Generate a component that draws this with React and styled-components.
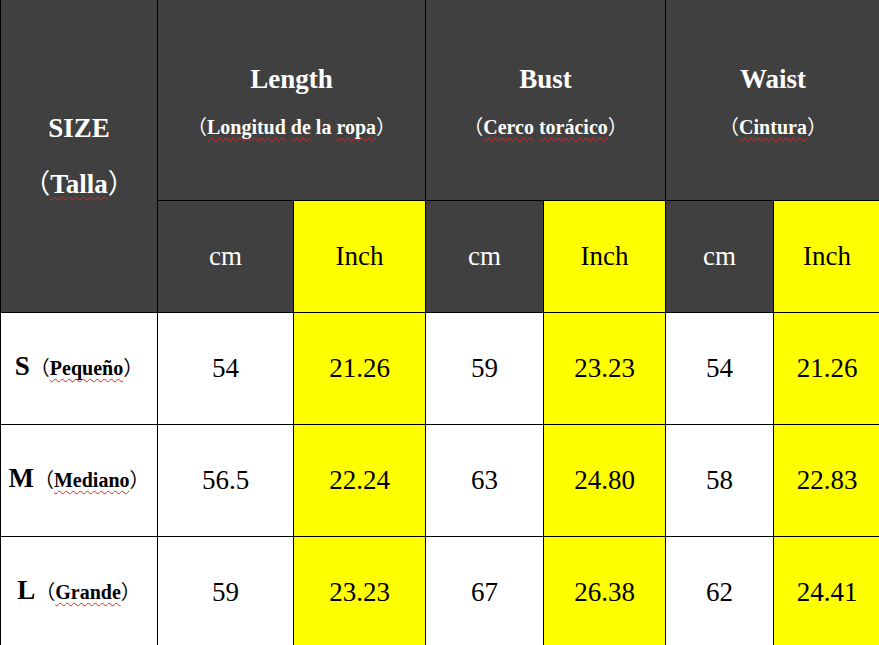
import React from 'react';
import styled, { createGlobalStyle } from 'styled-components';

const colors = {
    DARK: '#404040',
    YELLOW: '#ffff00',
    WHITE: '#ffffff',
    BLACK: '#000000',
    SQUIGGLE: '#d42a2a',
};

const GROUPS = [
    { TITLE: 'Length', SUB: [['Longitud', true], [' ', false], ['de', true], [' la ', false], ['ropa', true]] },
    { TITLE: 'Bust', SUB: [['Cerco', true], [' ', false], ['torácico', true]] },
    { TITLE: 'Waist', SUB: [['Cintura', true]] },
];

const ROWS = [
    { SIZE: 'S', NAME: 'Pequeño', VALUES: ['54', '21.26', '59', '23.23', '54', '21.26'] },
    { SIZE: 'M', NAME: 'Mediano', VALUES: ['56.5', '22.24', '63', '24.80', '58', '22.83'] },
    { SIZE: 'L', NAME: 'Grande', VALUES: ['59', '23.23', '67', '26.38', '62', '24.41'] },
];

const App = () => {
    return (
        <>
            <GlobalStyle />
            <Table>
                <SizeHead>
                    <HeadTitle>SIZE</HeadTitle>
                    <HeadSub $big><Paren>（</Paren><Spell>Talla</Spell><Paren>）</Paren></HeadSub>
                </SizeHead>
                {
                    GROUPS.map((group, index) => (
                        <GroupHead key={"g" + index}>
                            <HeadTitle>{group.TITLE}</HeadTitle>
                            <HeadSub>
                                <Paren>（</Paren>
                                {group.SUB.map(([text, wrong], i) =>
                                    wrong ? <Spell key={i}>{text}</Spell> : <span key={i}>{text}</span>
                                )}
                                <Paren>）</Paren>
                            </HeadSub>
                        </GroupHead>
                    ))
                }
                {
                    GROUPS.map((group, index) => (
                        <React.Fragment key={"u" + index}>
                            <Cell $tone="dark">cm</Cell>
                            <Cell $tone="yellow">Inch</Cell>
                        </React.Fragment>
                    ))
                }
                {
                    ROWS.map((row, index) => (
                        <React.Fragment key={"r" + index}>
                            <LabelCell>
                                <SizeLetter>{row.SIZE}</SizeLetter>
                                <SizeName><Paren>（</Paren><Spell>{row.NAME}</Spell><Paren>）</Paren></SizeName>
                            </LabelCell>
                            {
                                row.VALUES.map((value, i) => (
                                    <Cell key={i} $tone={i % 2 === 1 ? 'yellow' : 'white'}>{value}</Cell>
                                ))
                            }
                        </React.Fragment>
                    ))
                }
            </Table>
        </>
    );
}

//styles
const GlobalStyle = createGlobalStyle`
    html, body {
        margin: 0;
        padding: 0;
        overflow: hidden;
        background: ${colors.WHITE};
    }
    body {
        font-family: "Liberation Serif", serif;
    }
`

const Table = styled.div`
    display: grid;
    grid-template-columns: 156px 135px 131px 117px 121px 107px 106px;
    grid-template-rows: 200px 111px 111px 111px 111px;
    gap: 1px;
    padding-left: 1px;
    width: 880px;
    background: ${colors.BLACK};
    font-family: "Liberation Serif", serif;
`

const SizeHead = styled.div`
    grid-row: span 2;
    background: ${colors.DARK};
    color: ${colors.WHITE};
    display: flex;
    flex-direction: column;
    align-items: center;
    justify-content: center;
    gap: 22px;
`

const GroupHead = styled.div`
    grid-column: span 2;
    background: ${colors.DARK};
    color: ${colors.WHITE};
    display: flex;
    flex-direction: column;
    align-items: center;
    justify-content: center;
    gap: 15px;
    padding-top: 6px;
`

const HeadTitle = styled.div`
    font-family: "Liberation Serif", serif;
    font-size: 27px;
    font-weight: 700;
    line-height: 32px;
`

const HeadSub = styled.div`
    font-family: "Liberation Serif", serif;
    font-size: ${props => props.$big ? '27px' : '20px'};
    font-weight: 700;
    line-height: 32px;
    white-space: nowrap;
`

const Paren = styled.span`
    font-family: "Noto Sans CJK SC", sans-serif;
    font-weight: 400;
`

const Spell = styled.span`
    text-decoration: underline wavy ${colors.SQUIGGLE};
    text-decoration-thickness: 1px;
    text-underline-offset: 3px;
    text-decoration-skip-ink: none;
`

const TONES = {
    dark: [colors.DARK, colors.WHITE],
    yellow: [colors.YELLOW, colors.BLACK],
    white: [colors.WHITE, colors.BLACK],
};

const Cell = styled.div`
    background: ${props => TONES[props.$tone][0]};
    color: ${props => TONES[props.$tone][1]};
    display: flex;
    align-items: center;
    justify-content: center;
    font-family: "Liberation Serif", serif;
    font-size: 27px;
`

const LabelCell = styled.div`
    background: ${colors.WHITE};
    display: flex;
    align-items: baseline;
    justify-content: center;
    padding-top: 38px;
    white-space: nowrap;
    font-family: "Liberation Serif", serif;
`

const SizeLetter = styled.span`
    font-size: 27px;
    font-weight: 700;
`

const SizeName = styled.span`
    font-size: 20px;
    font-weight: 700;
`

export default App;
